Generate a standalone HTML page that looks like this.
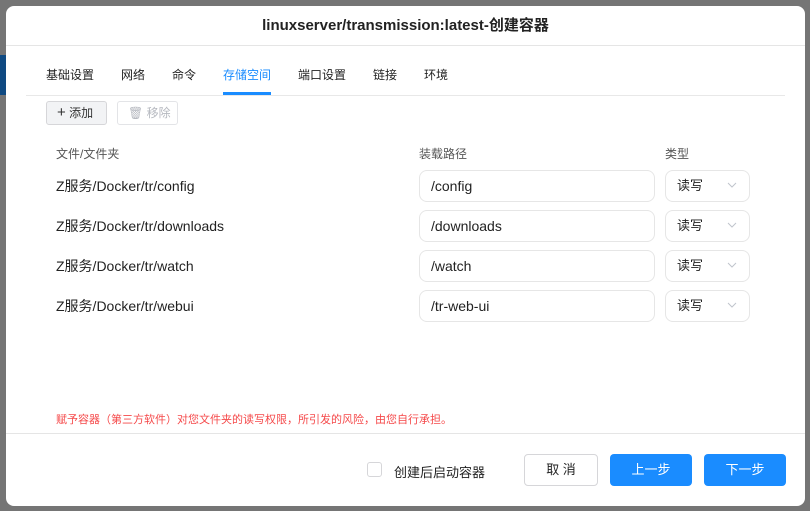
<!DOCTYPE html>
<html><head><meta charset="utf-8"><style>
*{box-sizing:border-box;margin:0;padding:0}
body{width:810px;height:511px;background:#757575;position:relative;overflow:hidden;font-family:"Liberation Sans","Noto Sans CJK SC",sans-serif;color:#222;font-size:14px}
.strip{position:absolute;left:0;top:55px;width:6px;height:40px;background:#0f4a82}
.dlg{position:absolute;left:6px;top:6px;width:799px;height:500px;background:#fff;border-radius:8px}
.title{position:absolute;left:0;right:0;top:0;height:40px;border-bottom:1px solid #e5e5e5;text-align:center;line-height:40px;font-weight:bold;font-size:15px;color:#222}
.tabs{position:absolute;left:20px;right:20px;top:44px;height:46px;border-bottom:1px solid #e8e8e8}
.tab{position:absolute;top:16px;font-size:12px;color:#222}
.tab.a{color:#1a8cff}
.ul{position:absolute;left:217px;top:86px;width:48px;height:3px;background:#1a8cff}
.btn{position:absolute;height:24px;border:1px solid #d6d6d9;border-radius:3px;font-size:12px;line-height:22px}
.th{position:absolute;top:139px;font-size:12px;color:#555}
.row{position:absolute;left:50px;font-size:14px;color:#222}
.inp{position:absolute;left:413px;width:236px;height:32px;border:1px solid #e6e6e6;border-radius:8px;padding-left:11px;line-height:30px;font-size:14px}
.sel{position:absolute;left:659px;width:85px;height:32px;border:1px solid #e6e6e6;border-radius:8px;padding-left:11px;line-height:30px;font-size:13px}
.sel svg{position:absolute;right:12px;top:11px}
.warn{position:absolute;left:50px;top:405px;font-size:11px;color:#f5494a}
.foot{position:absolute;left:0;right:0;top:427px;border-top:1px solid #e5e5e5}
.pb{position:absolute;top:448px;width:82px;height:32px;border-radius:4px;background:#1a8cff;color:#fff;text-align:center;line-height:32px;font-size:13px}
</style></head><body>
<div class="strip"></div>
<div class="dlg">
<div class="title">linuxserver/transmission:latest-创建容器</div>
<div class="tabs"></div>
<div class="tab" style="left:40px;top:60px">基础设置</div>
<div class="tab" style="left:115px;top:60px">网络</div>
<div class="tab" style="left:166px;top:60px">命令</div>
<div class="tab a" style="left:217px;top:60px">存储空间</div>
<div class="tab" style="left:292px;top:60px">端口设置</div>
<div class="tab" style="left:367px;top:60px">链接</div>
<div class="tab" style="left:418px;top:60px">环境</div>
<div class="ul"></div>
<div class="btn" style="left:40px;top:95px;width:61px;background:#f2f3f5;padding-left:10px;color:#333"><span style="font-size:15px">+</span> 添加</div>
<div class="btn" style="left:111px;top:95px;width:61px;background:#fff;padding-left:10px;color:#b5b8bf;border-color:#e3e4e7">🗑 移除</div>
<div class="th" style="left:50px">文件/文件夹</div>
<div class="th" style="left:413px">装载路径</div>
<div class="th" style="left:659px">类型</div>

<div class="row" style="top:170px">Z服务/Docker/tr/config</div>
<div class="inp" style="top:164px">/config</div>
<div class="sel" style="top:164px">读写<svg width="10" height="6"><path d="M1 1L5 5L9 1" fill="none" stroke="#c0c4cc"/></svg></div>

<div class="row" style="top:210px">Z服务/Docker/tr/downloads</div>
<div class="inp" style="top:204px">/downloads</div>
<div class="sel" style="top:204px">读写<svg width="10" height="6"><path d="M1 1L5 5L9 1" fill="none" stroke="#c0c4cc"/></svg></div>

<div class="row" style="top:250px">Z服务/Docker/tr/watch</div>
<div class="inp" style="top:244px">/watch</div>
<div class="sel" style="top:244px">读写<svg width="10" height="6"><path d="M1 1L5 5L9 1" fill="none" stroke="#c0c4cc"/></svg></div>

<div class="row" style="top:290px">Z服务/Docker/tr/webui</div>
<div class="inp" style="top:284px">/tr-web-ui</div>
<div class="sel" style="top:284px">读写<svg width="10" height="6"><path d="M1 1L5 5L9 1" fill="none" stroke="#c0c4cc"/></svg></div>

<div class="warn">赋予容器（第三方软件）对您文件夹的读写权限，所引发的风险，由您自行承担。</div>
<div class="foot"></div>
<div style="position:absolute;left:361px;top:456px;width:15px;height:15px;border:1px solid #d6d6d9;border-radius:3px"></div>
<div style="position:absolute;left:388px;top:456px;font-size:13px">创建后启动容器</div>
<div style="position:absolute;left:518px;top:448px;width:74px;height:32px;border:1px solid #d6d6d9;border-radius:4px;text-align:center;line-height:30px;font-size:13px">取 消</div>
<div class="pb" style="left:604px">上一步</div>
<div class="pb" style="left:698px">下一步</div>
</div>
</body></html>
